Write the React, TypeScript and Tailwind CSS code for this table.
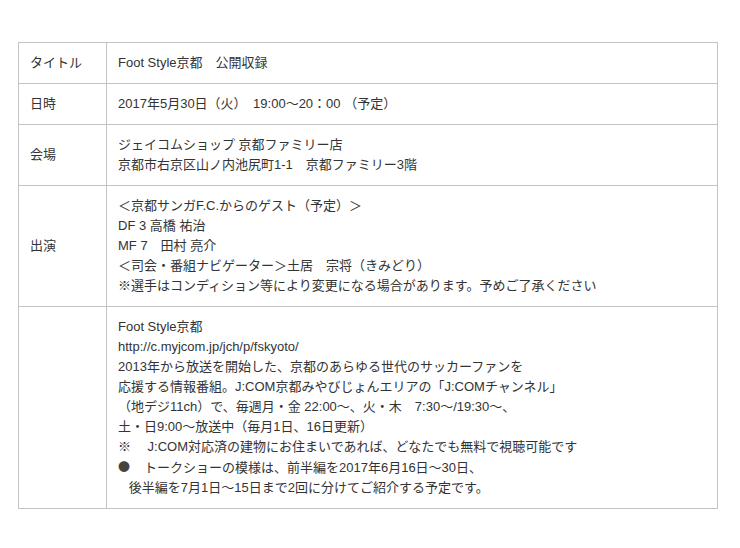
import type { ReactNode } from "react";

const rows: { label: string; lines: ReactNode[] }[] = [
  { label: "タイトル", lines: ["Foot Style京都　公開収録"] },
  { label: "日時", lines: ["2017年5月30日（火）　19:00～20：00 （予定）"] },
  {
    label: "会場",
    lines: [
      "ジェイコムショップ 京都ファミリー店",
      "京都市右京区山ノ内池尻町1-1　京都ファミリー3階",
    ],
  },
  {
    label: "出演",
    lines: [
      "＜京都サンガF.C.からのゲスト（予定）＞",
      "DF 3 高橋 祐治",
      "MF 7　田村 亮介",
      "＜司会・番組ナビゲーター＞土居　宗将（きみどり）",
      "※選手はコンディション等により変更になる場合があります。予めご了承ください",
    ],
  },
  {
    label: "",
    lines: [
      "Foot Style京都",
      "http://c.myjcom.jp/jch/p/fskyoto/",
      "2013年から放送を開始した、京都のあらゆる世代のサッカーファンを",
      "応援する情報番組。J:COM京都みやびじょんエリアの「J:COMチャンネル」",
      "（地デジ11ch）で、毎週月・金 22:00～、火・木　7:30～/19:30～、",
      "土・日9:00～放送中（毎月1日、16日更新）",
      "※　 J:COM対応済の建物にお住まいであれば、どなたでも無料で視聴可能です",
      <>
        <span className="inline-block w-[13px] font-['Noto_Sans_CJK_JP',sans-serif] text-[12px] text-[#444]">●</span>
        {"　トークショーの模様は、前半編を2017年6月16日～30日、"}
      </>,
      "   後半編を7月1日～15日まで2回に分けてご紹介する予定です。",
    ],
  },
];

const App = () => {
  return (
    <div className="min-h-screen bg-white pt-[42px] pl-[18px] font-['Liberation_Sans','Noto_Sans_CJK_JP',sans-serif] text-[13px] leading-[20px] text-[#333]">
      <div className="grid w-[700px] grid-cols-[88px_611px] border-t border-l border-[#c3c3c3]">
        {rows.map((row, i) => (
          <div key={i} className="contents">
            <div className="flex items-center border-r border-b border-[#c3c3c3] px-[11px] py-[10px] whitespace-pre">
              {row.label}
            </div>
            <div className="flex flex-col border-r border-b border-[#c3c3c3] px-[11px] py-[10px]">
              {row.lines.map((line, j) => (
                <span key={j} className="whitespace-pre">
                  {line}
                </span>
              ))}
            </div>
          </div>
        ))}
      </div>
    </div>
  );
};

export default App;
